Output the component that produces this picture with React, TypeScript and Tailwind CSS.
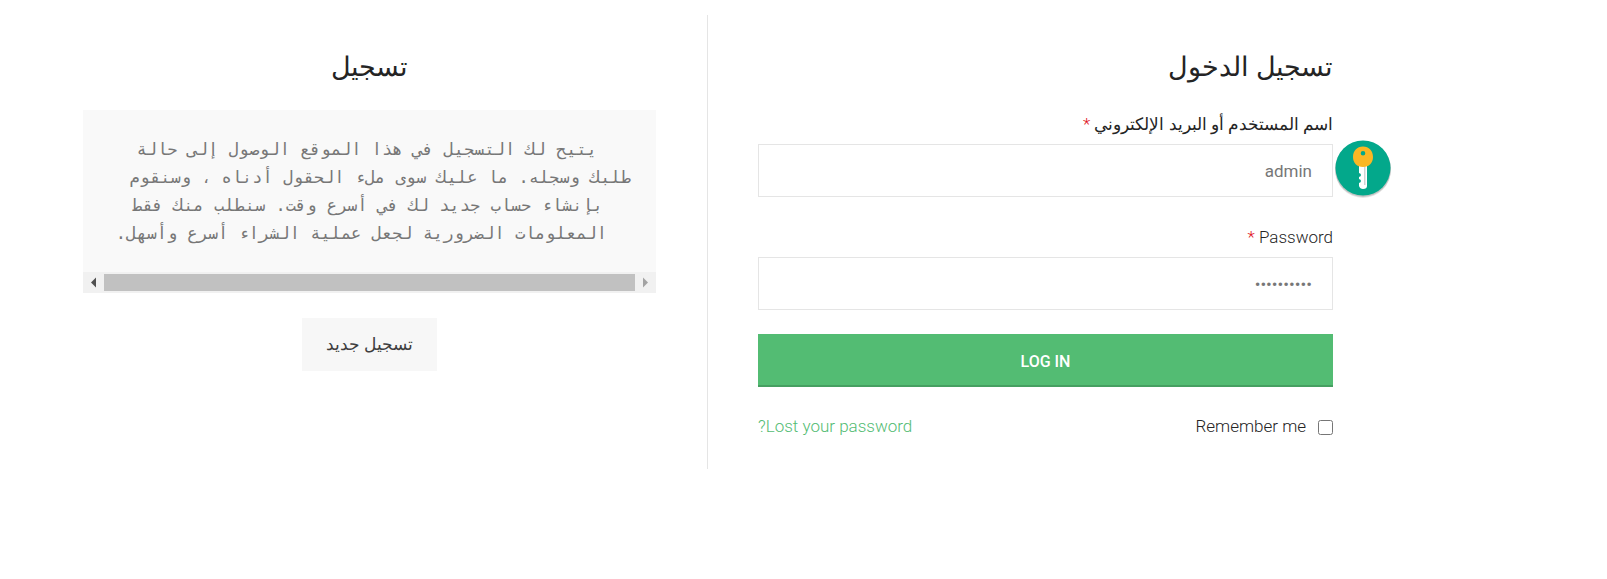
import React, { useState } from 'react';
import clsx from 'clsx';

const REGISTER_TEXT = [
    { text: 'يتيح لك التسجيل في هذا الموقع الوصول إلى حالة', indent: 'pr-[34px]' },
    { text: 'طلبك وسجله. ما عليك سوى ملء الحقول أدناه ، وسنقوم', indent: '' },
    { text: 'بإنشاء حساب جديد لك في أسرع وقت. سنطلب منك فقط', indent: 'pr-[28px]' },
    { text: 'المعلومات الضرورية لجعل عملية الشراء أسرع وأسهل.', indent: 'pr-[24px]' },
];

interface FieldProps {
    id: string;
    label: string;
    type: string;
    value: string;
    onChange: (value: string) => void;
    children?: React.ReactNode;
}

const Field: React.FC<FieldProps> = ({ id, label, type, value, onChange, children }) => (
    <div>
        <label htmlFor={id} className="block mb-1 h-8 leading-8 text-[#242424]">
            {label} <span className="text-[#e01020]">*</span>
        </label>
        <div className="relative">
            <input
                id={id}
                type={type}
                value={value}
                onChange={(e) => onChange(e.target.value)}
                className="block w-full h-[53px] px-5 border border-[#e5e5e5] bg-white text-[#777] font-normal outline-none"
            />
            {children}
        </div>
    </div>
);

const KeyBadge: React.FC = () => (
    <button type="button" aria-label="Fill in login" className="absolute -right-[60px] -top-[7px]">
        <svg width="60" height="62" viewBox="0 0 60 62" fill="none">
            <circle cx="30" cy="33" r="28" fill="#000" opacity="0.1" />
            <circle cx="30" cy="32" r="28" fill="#000" opacity="0.15" />
            <circle cx="30" cy="31" r="27.5" fill="#03a88b" />
            <path d="M26 27h8v22q0 3-4 3-3 0-4-3v-3q2-.5 2-2t-2-2v-2q2-.5 2-2t-2-2z" fill="#fff" />
            <path d="M31 29h1.5v19H31z" fill="#d0d3d4" />
            <path fillRule="evenodd" d="M30 9.500c6 0 10 4.500 10 10.500s-4 10-10 10-10-4-10-10 4-10.500 10-10.500zm0 4.500a2.300 2.300 0 1 0 0 4.600 2.300 2.300 0 0 0 0-4.600z" fill="#fbb724" />
        </svg>
    </button>
);

const ScrollBar: React.FC = () => (
    <div className="flex items-center h-[21px] bg-[#f1f1f1]" dir="ltr">
        <svg width="21" height="21" viewBox="0 0 21 21" className="shrink-0">
            <path d="M8 10.500l5-5v10z" fill="#505050" />
        </svg>
        <div className="flex-1 h-[17px] bg-[#c1c1c1]" />
        <svg width="21" height="21" viewBox="0 0 21 21" className="shrink-0">
            <path d="M13 10.500l-5-5v10z" fill="#a3a3a3" />
        </svg>
    </div>
);

export default function App() {
    const [username, setUsername] = useState('admin');
    const [password, setPassword] = useState('demo123456');
    const [remember, setRemember] = useState(false);

    return (
        <main
            dir="rtl"
            className="bg-white pt-[15px] pb-[109px] pl-[83px] pr-[274px] text-[17px] font-light text-[#242424] font-['Roboto','Open_Sans','DejaVu_Sans',sans-serif]"
        >
            <div className="grid grid-cols-2">
                {/* Login */}
                <section className="min-w-0 pt-8 pb-7 pl-[50px]">
                    <h2 className="h-10 leading-10 mb-[21px] text-[27px]">تسجيل الدخول</h2>
                    <form onSubmit={(e) => e.preventDefault()}>
                        <div className="flex flex-col gap-6">
                            <Field id="username" label="اسم المستخدم أو البريد الإلكتروني" type="text" value={username} onChange={setUsername}>
                                <KeyBadge />
                            </Field>
                            <Field id="password" label="Password" type="password" value={password} onChange={setPassword} />
                            <button
                                type="submit"
                                className="h-[53px] pt-1 bg-[#53bc73] border-b-2 border-[#469f61] text-white text-base font-medium"
                            >
                                LOG IN
                            </button>
                        </div>
                        <div className="flex items-center justify-between mt-[26px] h-7">
                            <label className="flex items-center gap-3">
                                <input
                                    type="checkbox"
                                    checked={remember}
                                    onChange={(e) => setRemember(e.target.checked)}
                                    className="size-[15px]"
                                />
                                Remember me
                            </label>
                            <a href="#lost" className="text-[#53bc73]">Lost your password?</a>
                        </div>
                    </form>
                </section>

                {/* Register */}
                <section className="min-w-0 pt-8 pr-[51px] border-r border-[#e5e5e5] text-center">
                    <h2 className="h-10 leading-10 mb-[23px] text-[27px]">تسجيل</h2>
                    <div className="bg-[#f9f9f9]">
                        <pre className="p-[25px] overflow-hidden text-right leading-7 text-[#777] font-['DejaVu_Sans_Mono',monospace]">
                            {REGISTER_TEXT.map((line) => (
                                <span key={line.text} className={clsx('block', line.indent)}>{line.text}</span>
                            ))}
                        </pre>
                        <ScrollBar />
                    </div>
                    <button type="button" className="mt-[25px] h-[53px] px-6 bg-[#f7f7f7] text-[#3e3e3e]">
                        تسجيل جديد
                    </button>
                </section>
            </div>
        </main>
    );
}
